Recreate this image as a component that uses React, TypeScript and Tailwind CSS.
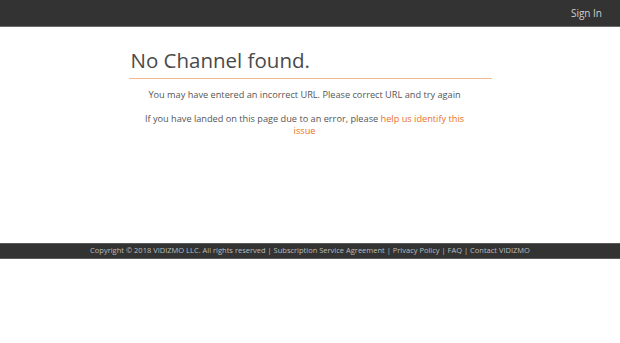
export default function App() {
  return (
    <div className="min-h-[343px] bg-white" style={{ fontFamily: '"Open Sans", "DejaVu Sans", sans-serif' }}>
      <header className="flex h-[27px] items-center justify-end border-b border-[#6a6a6a] bg-[#333333] pr-[18px]">
        <a href="#" className="text-[10px] text-[#cfcfcf]">Sign In</a>
      </header>
      <main className="h-[216px]">
        <div className="mx-auto w-[363px] pt-[19px]">
          <h1 className="border-b border-[#f2b891] pb-[4px] pl-[2px] text-[20.5px] leading-[28px] text-[#4a4a4a]">No Channel found.</h1>
          <div className="pt-[10px] pr-[11px] text-center text-[9.2px] leading-[12px] text-[#555555]">
            <p>You may have entered an incorrect URL. Please correct URL and try again</p>
            <p className="mx-auto mt-[12px] w-[330px]">
              If you have landed on this page due to an error, please{" "}
              <a href="#" className="text-[#e8702a]">help us identify this issue</a>
            </p>
          </div>
        </div>
      </main>
      <footer className="flex h-[16px] items-center justify-center border-y border-[#5a5a5a] bg-[#333333] text-[7.5px] text-[#bdbdbd]">
        <span>Copyright © 2018 VIDIZMO LLC. All rights reserved | Subscription Service Agreement | Privacy Policy | FAQ | Contact VIDIZMO</span>
      </footer>
    </div>
  );
}
